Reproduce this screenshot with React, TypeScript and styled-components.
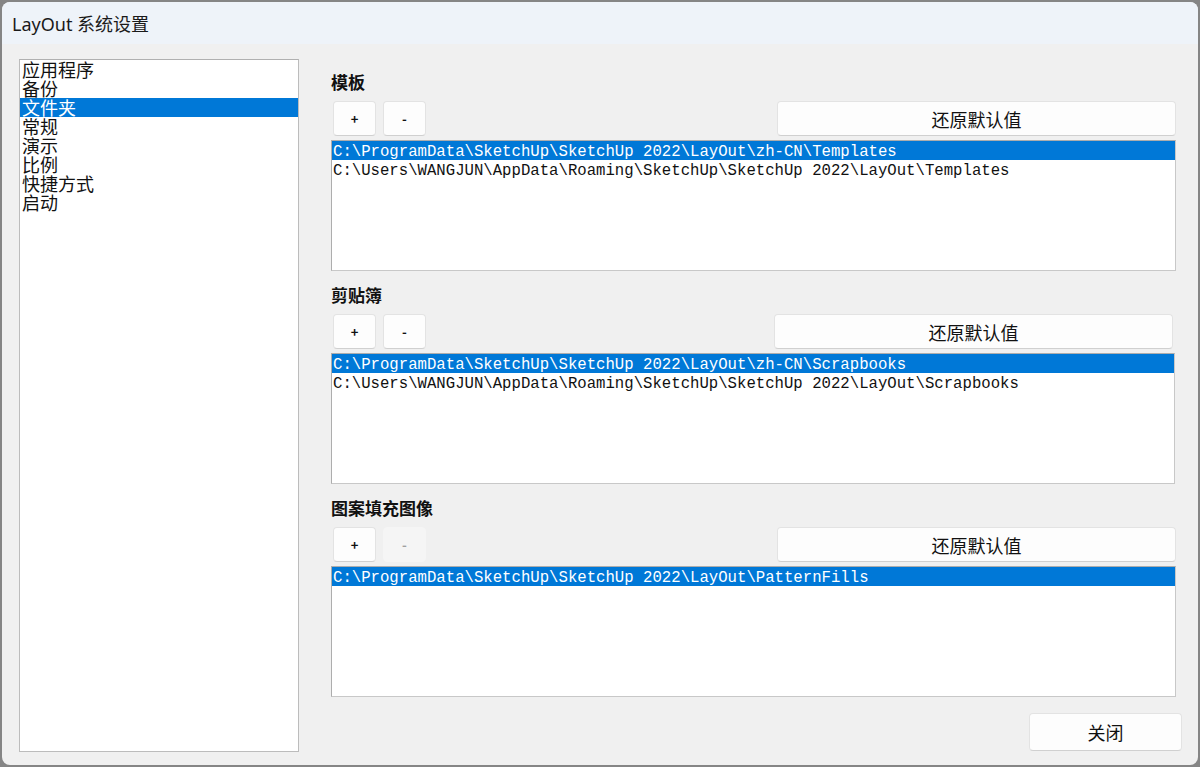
import styled, { createGlobalStyle } from 'styled-components';

const GlobalStyle = createGlobalStyle`
  html, body {
    margin: 0;
    padding: 0;
    background: #858585;
  }
  body {
    width: 1200px;
    height: 767px;
    overflow: hidden;
  }
`;

const CJK = `"Noto Sans CJK SC", "Noto Sans", sans-serif`;
const MONO = `"Liberation Mono", "Noto Sans CJK SC", monospace`;

const Window = styled.div`
  margin: 2px;
  width: 1196px;
  height: 763px;
  border-radius: 8px;
  overflow: hidden;
  background: #f0f0f0;
  display: flex;
  flex-direction: column;
`;

const TitleBar = styled.div`
  height: 42px;
  flex: none;
  background: #eef3f9;
  display: flex;
  align-items: center;
  padding-left: 10px;
  font-family: "Noto Sans", "Noto Sans CJK SC", sans-serif;
  font-size: 18px;
  color: #1a1a1a;
`;

const Body = styled.div`
  flex: 1;
  display: grid;
  grid-template-columns: 280px 1fr;
  column-gap: 32px;
  padding: 15px 16px 13px 17px;
`;

const NavList = styled.div`
  background: #fff;
  border: 1px solid #bcbcbc;
  border-top-color: #b0b0b0;
  font-family: ${CJK};
  font-size: 18px;
  color: #111;
`;

const NavItem = styled.div<{ $selected?: boolean }>`
  height: 19px;
  line-height: 18px;
  padding-left: 2px;
  white-space: nowrap;
  background: ${(p) => (p.$selected ? '#0078d7' : 'transparent')};
  color: ${(p) => (p.$selected ? '#fff' : '#111')};
`;

const Content = styled.div`
  display: flex;
  flex-direction: column;
  padding-top: 12px;
`;

const Section = styled.section`
  display: flex;
  flex-direction: column;
  margin-bottom: 13px;
  padding-right: 6px;
`;

const Heading = styled.div`
  height: 22px;
  line-height: 22px;
  font-family: ${CJK};
  font-weight: 700;
  font-size: 17px;
  color: #111;
  margin-bottom: 8px;
`;

const ButtonRow = styled.div<{ $shift?: number }>`
  display: flex;
  gap: 7px;
  padding-left: 2px;
  padding-right: ${(p) => p.$shift ?? 0}px;
  margin-bottom: 4px;
`;

const Btn = styled.button<{ $disabled?: boolean }>`
  height: 35px;
  border-radius: 4px;
  border: 1px solid ${(p) => (p.$disabled ? '#f5f5f5' : '#e3e3e3')};
  border-bottom-color: ${(p) => (p.$disabled ? '#f5f5f5' : '#d0d0d0')};
  background: ${(p) => (p.$disabled ? '#f5f5f5' : '#fdfdfd')};
  color: ${(p) => (p.$disabled ? '#a0a0a0' : '#111')};
  padding: 0;
  font-family: ${CJK};
`;

const SmallBtn = styled(Btn)`
  width: 43px;
  font-size: 13px;
  font-weight: 700;
`;

const ResetBtn = styled(Btn)`
  width: 399px;
  margin-left: auto;
  font-size: 18px;
`;

const PathList = styled.div<{ $trim?: number }>`
  height: 131px;
  box-sizing: border-box;
  margin-right: ${(p) => p.$trim ?? 0}px;
  background: #fff;
  border: 1px solid #adadad;
  border-right-color: #c8c8c8;
  border-bottom-color: #c8c8c8;
  font-family: ${MONO};
  font-size: 15.67px;
`;

const PathRow = styled.div<{ $selected?: boolean }>`
  box-sizing: border-box;
  height: 19px;
  padding-top: 3px;
  line-height: 16px;
  padding-left: 1px;
  white-space: nowrap;
  background: ${(p) => (p.$selected ? '#0078d7' : 'transparent')};
  color: ${(p) => (p.$selected ? '#fff' : '#111')};
`;

const Footer = styled.div`
  display: flex;
  justify-content: flex-end;
  margin-top: 3px;
`;

const CloseBtn = styled(Btn)`
  width: 153px;
  height: 38px;
  font-size: 18px;
`;

const navItems = ['应用程序', '备份', '文件夹', '常规', '演示', '比例', '快捷方式', '启动'];

type Folder = {
  title: string;
  paths: string[];
  minusDisabled?: boolean;
  shift?: number;
  trim?: number;
};

const folders: Folder[] = [
  {
    title: '模板',
    paths: [
      'C:\\ProgramData\\SketchUp\\SketchUp 2022\\LayOut\\zh-CN\\Templates',
      'C:\\Users\\WANGJUN\\AppData\\Roaming\\SketchUp\\SketchUp 2022\\LayOut\\Templates',
    ],
  },
  {
    title: '剪贴簿',
    paths: [
      'C:\\ProgramData\\SketchUp\\SketchUp 2022\\LayOut\\zh-CN\\Scrapbooks',
      'C:\\Users\\WANGJUN\\AppData\\Roaming\\SketchUp\\SketchUp 2022\\LayOut\\Scrapbooks',
    ],
    shift: 3,
    trim: 1,
  },
  {
    title: '图案填充图像',
    paths: ['C:\\ProgramData\\SketchUp\\SketchUp 2022\\LayOut\\PatternFills'],
    minusDisabled: true,
  },
];

const App = () => {
  return (
    <>
      <GlobalStyle />
      <Window>
        <TitleBar>LayOut 系统设置</TitleBar>
        <Body>
          <NavList>
            {navItems.map((item) => (
              <NavItem key={item} $selected={item === '文件夹'}>
                {item}
              </NavItem>
            ))}
          </NavList>
          <Content>
            {folders.map((f) => (
              <Section key={f.title}>
                <Heading>{f.title}</Heading>
                <ButtonRow $shift={f.shift}>
                  <SmallBtn>+</SmallBtn>
                  <SmallBtn $disabled={f.minusDisabled}>-</SmallBtn>
                  <ResetBtn>还原默认值</ResetBtn>
                </ButtonRow>
                <PathList $trim={f.trim}>
                  {f.paths.map((p, i) => (
                    <PathRow key={p} $selected={i === 0}>
                      {p}
                    </PathRow>
                  ))}
                </PathList>
              </Section>
            ))}
            <Footer>
              <CloseBtn>关闭</CloseBtn>
            </Footer>
          </Content>
        </Body>
      </Window>
    </>
  );
};

export default App;
